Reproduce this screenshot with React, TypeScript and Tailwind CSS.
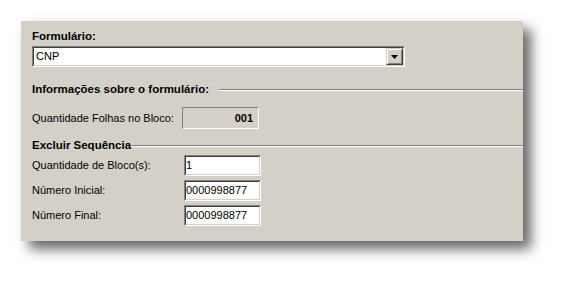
const font = "font-['Liberation_Sans',Arial,sans-serif]";

// classic win2k sunken edit box
const Sunken = ({ className = "", children }: { className?: string; children?: React.ReactNode }) => (
  <div className={`border border-t-[#808080] border-l-[#808080] border-b-white border-r-white ${className}`}>
    <div className="h-full border border-t-[#404040] border-l-[#404040] border-b-[#d4d0c8] border-r-[#d4d0c8] bg-white">
      {children}
    </div>
  </div>
);

const GroupTitle = ({ title, gap }: { title: string; gap: string }) => (
  <div className={`flex items-center h-[13px] ${gap}`}>
    <span className="text-[11.5px] leading-[13px] font-bold text-black whitespace-nowrap">{title}</span>
    <div className="flex-1 flex flex-col">
      <div className="h-px bg-[#808080]" />
      <div className="h-px bg-white" />
    </div>
  </div>
);

const InputRow = ({ label, value }: { label: string; value: string }) => (
  <div className="flex items-center h-[21px]">
    <span className="w-[152px] text-[11px] leading-[13px] text-black">{label}</span>
    <Sunken className="w-[77px] h-[21px]">
      <div className="text-[11px] leading-[17px] text-black">{value}</div>
    </Sunken>
  </div>
);

export default function App() {
  return (
    <div className={`w-[565px] h-[284px] bg-white pt-[21px] pl-[21px] ${font}`}>
      <div className="w-[502px] h-[220px] bg-[#d4d0c8] shadow-[8px_8px_12px_rgba(0,0,0,0.6)] pt-[9px] pl-[11px] flex flex-col">
        <div className="text-[11.5px] leading-[13px] font-bold text-black">Formulário:</div>

        <Sunken className="mt-[3px] w-[373px] h-[21px]">
          <div className="h-full flex items-center">
            <span className="flex-1 pl-[2px] text-[11px] leading-[13px] text-black">CNP</span>
            <div className="w-[17px] h-full bg-[#d4d0c8] border border-t-[#d4d0c8] border-l-[#d4d0c8] border-b-[#404040] border-r-[#404040] flex items-center justify-center shadow-[inset_1px_1px_0_white,inset_-1px_-1px_0_#808080]">
              <svg width="7" height="4" viewBox="0 0 7 4">
                <path d="M0 0h7L3.5 4z" fill="black" />
              </svg>
            </div>
          </div>
        </Sunken>

        <div className="mt-[16px]">
          <GroupTitle title="Informações sobre o formulário:" gap="gap-[10px]" />
        </div>

        <div className="mt-[11px] flex items-center h-[22px]">
          <span className="w-[150px] text-[11px] leading-[13px] text-black">Quantidade Folhas no Bloco:</span>
          <div className="w-[77px] h-[22px] border border-t-[#808080] border-l-[#808080] border-b-white border-r-white flex items-center justify-end pr-[5px]">
            <span className="text-[11px] leading-[13px] font-bold text-black">001</span>
          </div>
        </div>

        <div className="mt-[10px]">
          <GroupTitle title="Excluir Sequência" gap="gap-0" />
        </div>

        <div className="mt-[3px] flex flex-col gap-[4px]">
          <InputRow label="Quantidade de Bloco(s):" value="1" />
          <InputRow label="Número Inicial:" value="0000998877" />
          <InputRow label="Número Final:" value="0000998877" />
        </div>
      </div>
    </div>
  );
}
